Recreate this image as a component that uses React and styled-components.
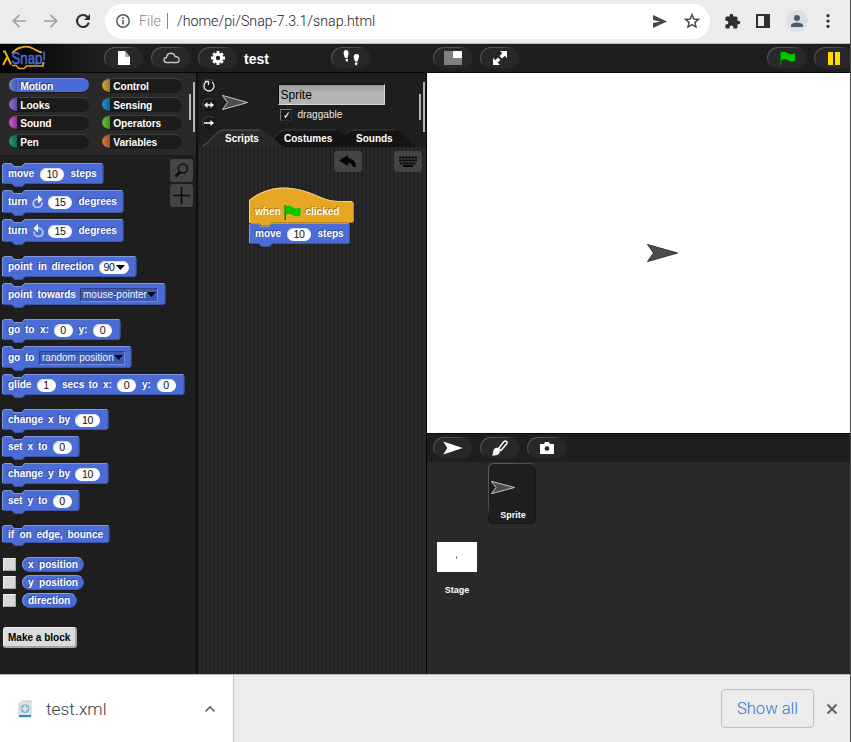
import React from "react";
import styled, { createGlobalStyle } from "styled-components";

const Global = createGlobalStyle`
  *, *::before, *::after { box-sizing: border-box; }
  html, body { margin: 0; padding: 0; background: #1e1e1e; overflow: hidden; }
  svg { display: block; flex: none; overflow: visible; }
`;

const Window = styled.div`
  width: 851px;
  height: 742px;
  display: grid;
  grid-template-rows: 44px 29px 601px 68px;
  overflow: hidden;
  border-right: 1px solid #4b4b4b;
  font-family: "Liberation Sans", Arial, sans-serif;
  white-space: nowrap;
`;

/* ---------- browser chrome ---------- */
const BrowserBar = styled.header`
  display: flex;
  align-items: center;
  background: #ececec;
  border-bottom: 1px solid #b9bcbc;
  padding: 0 0 1px 12px;
`;
const NavIcons = styled.div`
  display: flex;
  gap: 18px;
  width: 93px;
`;
const AddressBar = styled.div`
  width: 605px;
  height: 35px;
  border-radius: 18px;
  background: #fff;
  display: flex;
  align-items: center;
  padding: 0 10px 0 11px;
  font-family: Roboto, sans-serif;
  font-weight: 300;
  font-size: 14.25px;
  color: #1d2124;
`;
const Scheme = styled.span`
  width: 26px;
  margin-left: 9px;
  color: #80868b;
`;
const Bar = styled.span`
  width: 1px;
  height: 16px;
  background: #85898c;
  margin-left: 2px;
`;
const Url = styled.span`
  flex: 1;
  margin-left: 9px;
`;
const AddressIcons = styled.div`
  display: flex;
  gap: 17px;
  align-items: center;
`;
const BrowserIcons = styled.div`
  display: flex;
  align-items: center;
  gap: 12.5px;
  margin-left: 13.5px;
`;
const Avatar = styled.div`
  width: 22px;
  height: 22px;
  border-radius: 50%;
  background: #dbdfe6;
  display: flex;
  align-items: center;
  justify-content: center;
`;

/* ---------- control bar ---------- */
const ControlBar = styled.div`
  display: flex;
  padding-top: 3px;
  background: linear-gradient(90deg, #000 0, #1e1e1e 100px);
  border-bottom: 1px solid #050505;
  overflow: hidden;
`;
const LogoBox = styled.div`
  width: 104px;
  flex: none;
  padding-left: 2px;
`;
const Group = styled.div`
  display: flex;
  gap: 7px;
  width: ${(p) => p.$w}px;
  flex: none;
`;
const PushButton = styled.div`
  width: 40px;
  height: 22px;
  flex: none;
  border-radius: 11px;
  border: 1px solid transparent;
  background: linear-gradient(#282828, #282828) padding-box,
    linear-gradient(150deg, #5c5c5c 0, #4c4c4c 34%, #222 46%) border-box;
  display: flex;
  align-items: center;
  justify-content: center;
`;
const ProjectTitle = styled.div`
  width: 89px;
  flex: none;
  padding-left: 2px;
  color: #fff;
  font-weight: bold;
  font-size: 14px;
  line-height: 24px;
`;

/* ---------- columns ---------- */
const Main = styled.main`
  display: grid;
  grid-template-columns: 196px 231px 1fr;
  background: #1e1e1e;
`;
const LeftColumn = styled.section`
  position: relative;
  display: flex;
  flex-direction: column;
`;
const Categories = styled.div`
  height: 82px;
  padding: 5px 0 0 9px;
  background: #292929;
  display: grid;
  grid-template-columns: 80px 80px;
  grid-auto-rows: 18.6px;
  column-gap: 13px;
`;
const Category = styled.div`
  height: 15px;
  border-radius: 8px;
  padding-left: 11.3px;
  font-size: 10.2px;
  letter-spacing: -0.1px;
  font-weight: bold;
  line-height: 15px;
  color: #fff;
  text-shadow: ${(p) => (p.$active ? "-1px -1px 0 #25366a" : "-1px -1px 0 #111")};
  border-top: 1px solid ${(p) => (p.$active ? "#7189dc" : "#404040")};
  border-bottom: 1px solid #181818;
  background: linear-gradient(90deg, ${(p) => p.$color}, ${(p) => p.$dark}) 0 0 / 8px 100% no-repeat,
    ${(p) => (p.$active ? "#4a6cd4" : "#1c1c1c")};
`;
const Palette = styled.div`
  display: flex;
  flex-direction: column;
  align-items: flex-start;
  padding: 8.4px 0 0 2px;
`;
const ScrollBars = styled.div`
  position: absolute;
  top: ${(p) => p.$top}px;
  right: ${(p) => p.$right}px;
  display: flex;
  gap: 2px;
  align-items: center;
  &::before, &::after {
    content: "";
    width: 2px;
    height: 26px;
    background: #b4b4b4;
  }
  &::after { height: 50px; }
`;
const ToolStack = styled.div`
  position: absolute;
  top: 86px;
  left: 170px;
  display: flex;
  flex-direction: column;
  gap: 2px;
`;
const ToolButton = styled.div`
  width: ${(p) => p.$w || 23}px;
  height: ${(p) => p.$h || 23}px;
  border-radius: 3px;
  background: #444;
  display: flex;
  align-items: center;
  justify-content: center;
`;

/* ---------- blocks ---------- */
const BlockBody = styled.div`
  position: relative;
  width: ${(p) => p.$w}px;
  height: ${(p) => p.$h}px;
  margin-top: ${(p) => p.$mt || 0}px;
  flex: none;
`;
const BlockShape = styled.svg`
  position: absolute;
  inset: 0;
`;
const BlockContent = styled.div`
  position: relative;
  height: 100%;
  padding: ${(p) => p.$pt || 1}px 0 0 6px;
  display: flex;
  align-items: center;
  font-size: 10px;
  font-weight: bold;
  line-height: 12px;
  color: #fff;
  text-shadow: -1px -1px 0 ${(p) => p.$shadow || "#304896"};
`;
const Word = styled.span`
  flex: none;
  width: ${(p) => p.$w}px;
`;
const NumberSlot = styled.span`
  flex: none;
  width: ${(p) => p.$w}px;
  height: 13px;
  margin-right: ${(p) => p.$mr ?? 6.5}px;
  border-radius: 7px;
  background: #fff;
  box-shadow: inset 1px 1px 0 #d5daea;
  color: #111;
  font-weight: normal;
  font-size: 10.6px;
  letter-spacing: -0.3px;
  line-height: 14px;
  text-shadow: none;
  display: flex;
  align-items: center;
  justify-content: center;
  gap: 1px;
`;
const MenuSlot = styled.span`
  flex: none;
  width: ${(p) => p.$w}px;
  height: 14px;
  background: #3d5ab2;
  border: 1px solid #2c4285;
  border-right-color: #6f89dc;
  border-bottom-color: #6f89dc;
  padding: 0 1px 0 2px;
  display: flex;
  align-items: center;
  justify-content: space-between;
  font-weight: normal;
  font-size: 10px;
  text-shadow: none;
  color: #f4f6ff;
`;
const Dot = styled.i`
  font-style: normal;
  color: #e8957a;
`;
const Watcher = styled.div`
  display: flex;
  align-items: center;
  gap: 6px;
  height: 15px;
  margin: ${(p) => p.$mt}px 0 0 1px;
`;
const WatchBox = styled.div`
  width: 13px;
  height: 13px;
  background: #d8d8d8;
  border: 1px solid #f0f0f0;
  border-right-color: #a8a8a8;
  border-bottom-color: #a8a8a8;
`;
const Reporter = styled.div`
  width: ${(p) => p.$w}px;
  height: 15px;
  border-radius: 8px;
  background: #4a6cd4;
  border: 1px solid #8399e2;
  border-right-color: #3c58b0;
  border-bottom-color: #3c58b0;
  padding-left: 5px;
  color: #fff;
  font-size: 10px;
  font-weight: bold;
  line-height: 14px;
  word-spacing: 2.7px;
  text-shadow: -1px -1px 0 #304896;
`;
const MakeBlock = styled.div`
  width: 74px;
  height: 21px;
  margin: 19px 0 0 1px;
  border-radius: 3px;
  background: #dcdcdc;
  border: 1px solid #f2f2f2;
  border-right: 2px solid #a5a5a5;
  border-bottom: 2px solid #a5a5a5;
  padding-left: 4px;
  font-size: 10px;
  font-weight: bold;
  line-height: 19px;
  color: #000;
`;

/* ---------- middle column ---------- */
const MiddleColumn = styled.section`
  position: relative;
  display: flex;
  flex-direction: column;
  border-left: 2px solid #101010;
  border-right: 1px solid #050505;
`;
const SpriteBar = styled.div`
  height: 56px;
  display: flex;
  padding: 6px 0 0 3.5px;
`;
const RotationStack = styled.div`
  display: flex;
  flex-direction: column;
  gap: 5px;
  width: 20px;
`;
const RotationButton = styled.div`
  width: 14px;
  height: 14px;
  border-radius: 50%;
  background: #181818;
  border: 1px solid #161616;
  border-top-color: #474747;
  border-left-color: #474747;
  display: flex;
  align-items: center;
  justify-content: center;
`;
const CostumeHolder = styled.div`
  width: 56px;
  padding-top: 16px;
`;
const SpriteFields = styled.div`
  padding-top: 5px;
`;
const NameField = styled.div`
  width: 107px;
  height: 21px;
  padding-left: 2px;
  background: linear-gradient(#9c9c9c, #b4b4b4 8px);
  border: 1px solid #0c0c0c;
  border-right-color: #d8d8d8;
  border-bottom-color: #d8d8d8;
  font-size: 12px;
  line-height: 20px;
  color: #000;
`;
const DragRow = styled.div`
  display: flex;
  align-items: center;
  gap: 6px;
  margin: 4px 0 0 2px;
  font-size: 10.1px;
  line-height: 12px;
  color: #e6e6e6;
`;
const DragBox = styled.div`
  width: 12px;
  height: 12px;
  background: #1b1b1b;
  border: 1px solid #777;
  border-right-color: #2c2c2c;
  border-bottom-color: #2c2c2c;
`;
const Tabs = styled.div`
  position: relative;
  height: 18px;
  display: flex;
  padding-left: 27px;
  font-size: 10px;
  line-height: 19px;
  font-weight: bold;
  color: #fff;
`;
const TabShapes = styled.svg`
  position: absolute;
  top: 0;
  left: 0;
`;
const TabLabel = styled.span`
  position: relative;
  width: ${(p) => p.$w}px;
`;
const Scripts = styled.div`
  flex: 1;
  background: repeating-linear-gradient(90deg, #1f1f1f 0 1px, #2a2a2a 1px 3px, #242424 3px 4px);
  padding: 4px 4.5px 0 51px;
`;
const ScriptTools = styled.div`
  display: flex;
  justify-content: flex-end;
  gap: 32px;
`;
const Script = styled.div`
  margin-top: 16.4px;
`;

/* ---------- right column ---------- */
const RightColumn = styled.section`
  display: grid;
  grid-template-rows: 360px 29px 1fr;
  min-width: 0;
`;
const Stage = styled.div`
  background: #fff;
  display: grid;
  place-items: center;
  padding-left: 47px;
`;
const CorralBar = styled.div`
  display: flex;
  gap: 7px;
  padding: 3px 0 0 6px;
  border-top: 1px solid #080808;
`;
const Corral = styled.div`
  background: #292929;
  display: flex;
  align-items: flex-start;
  gap: 11px;
  padding: 1px 0 0 10px;
  color: #fff;
  font-size: 9px;
  font-weight: bold;
  text-align: center;
`;
const StageIcon = styled.div`
  width: 40px;
  margin-top: 79px;
`;
const StageThumb = styled.div`
  height: 30px;
  margin-bottom: 13px;
  background: #fff;
  display: grid;
  place-items: center;
`;
const SpriteIcon = styled.div`
  width: 48px;
  height: 61px;
  border-radius: 6px;
  border: 1px solid transparent;
  background: linear-gradient(#1e1e1e, #1e1e1e) padding-box,
    linear-gradient(135deg, #666 0, #4a4a4a 42%, #171717 50%) border-box;
  display: flex;
  flex-direction: column;
  padding: 17px 0 0 2px;
  gap: 16px;
`;

/* ---------- download bar ---------- */
const DownloadBar = styled.footer`
  display: flex;
  align-items: center;
  background: #ececec;
  border-top: 1px solid #b8b8b8;
  font-family: Roboto, sans-serif;
  font-weight: 300;
  font-size: 17px;
`;
const DownloadItem = styled.div`
  width: 234px;
  height: 100%;
  border-right: 1px solid #c4c4c4;
  background: #fff;
  display: flex;
  align-items: center;
  padding: 0 18px 0 19px;
  font-size: 17.3px;
  color: #3a3d40;
`;
const FileName = styled.span`
  flex: 1;
  margin-left: 15px;
`;
const ShowAll = styled.div`
  width: 93px;
  height: 39px;
  margin-left: auto;
  border: 1px solid #bfbfbf;
  border-radius: 4px;
  color: #3272d8;
  font-size: 16.6px;
  text-align: center;
  line-height: 37px;
`;
const CloseSlot = styled.div`
  width: 36px;
  display: flex;
  justify-content: center;
`;

function BlockOutline({ w, h }) {
  return (
    <BlockShape width={w} height={h + 3}>
      <path
        d={`M0 2 L2 0 H9.5 L12 3 H20 L23 0 H${w - 2} L${w} 2 V${h - 2} L${w - 2} ${h} H23 L20 ${h + 3} H13 L10 ${h} H2 L0 ${h - 2} Z`}
        fill="#4a6cd4"
      />
      <path
        d={`M.5 ${h - 1} V2 L2 .5 H9.5 L11.5 3.5 H20 L22.5 .5 H${w - 1}`}
        fill="none"
        stroke="#8197e0"
      />
      <path
        d={`M2 ${h - 0.5} H10 L13 ${h + 2.5} H20 L23 ${h - 0.5} H${w - 2} L${w - 0.5} ${h - 2} V3`}
        fill="none"
        stroke="#3b56a9"
      />
    </BlockShape>
  );
}

function Block({ w, h, mt, pt, children }) {
  return (
    <BlockBody $w={w} $h={h} $mt={mt}>
      <BlockOutline w={w + 0.4} h={h} />
      <BlockContent $pt={pt}>{children}</BlockContent>
    </BlockBody>
  );
}

const Caret = () => (
  <svg width="9" height="5"><path d="M0 0H9L4.5 5Z" fill="#050505" /></svg>
);

const Turn = ({ flip }) => (
  <svg width="12" height="16" viewBox="0 0 12 16">
    <g transform={flip ? "translate(12 0) scale(-1 1)" : undefined}>
      <path d="M6 5.2C.2 5.5 0 11.5 3.500 13C7 14.500 10.500 12 10 8.300" fill="none" stroke="#b9c8f6" strokeWidth="1.7" />
      <path d="M6 .8L10.500 5.500L6 9.500Z" fill="#fff" />
    </g>
  </svg>
);

const Arrow = ({ w, h, fill = "#4c4c4c", stroke }) => (
  <svg width={w} height={h} viewBox="0 0 31 18" preserveAspectRatio="none">
    <path d="M.5 .5L30.500 9L.5 17.500L6.500 9Z" fill={fill} stroke={stroke} vectorEffect="non-scaling-stroke" />
  </svg>
);

const Flag = ({ w = 16, h = 15 }) => (
  <svg width={w} height={h} viewBox="0 0 16 15">
    <path d="M0 0H1.500V15H0Z" fill="#067a06" />
    <path d="M1 1.500C4 .2 6 1 8.500 2.500C11 4 13 3.300 16 2.800V10.500C13 12 10.500 11.300 8.500 10C6 8.400 3.500 8.800 1 10Z" fill="#00c800" />
  </svg>
);

const Logo = () => (
  <svg width="48" height="24" viewBox="0 0 48 24">
    <path d="M10 6C13 4 15 .5 19 .5C23-.8 28-.3 31 1.500C34 3 37 5 40 5.500" fill="none" stroke="#e8a917" strokeWidth="1.8" />
    <path d="M10 18.500H14L17 21.500H22L24.500 19H41V15" fill="none" stroke="#e8a917" strokeWidth="1.6" />
    <path d="M1 4.500H3L9 17.500M5.300 10L1 18" fill="none" stroke="#f0ad10" strokeWidth="2" />
    <text x="9.500" y="16.500" textLength="34.500" lengthAdjust="spacingAndGlyphs" fontFamily="Liberation Sans" fontSize="16.500" fill="#4a6cd4" stroke="#4a6cd4" strokeWidth=".5">Snap!</text>
  </svg>
);

const categories = [
  ["Motion", "#6f8ad0", "#3f5aa8"], ["Control", "#d8ac45", "#9d7420"],
  ["Looks", "#9a74d0", "#6543a5"], ["Sensing", "#2196d0", "#0a6394"],
  ["Sound", "#d060cb", "#8c2f92"], ["Operators", "#76c13c", "#418b10"],
  ["Pen", "#20a078", "#08664b"], ["Variables", "#e07d42", "#a54e1b"],
];

export default function App() {
  return (
    <>
      <Global />
      <Window>
        <BrowserBar>
          <NavIcons>
            <svg width="14" height="14" viewBox="0 0 14 14" fill="none" stroke="#a0a0a0" strokeWidth="1.7"><path d="M14 7H1.500M7.500 .8L1.300 7L7.500 13.200" /></svg>
            <svg width="14" height="14" viewBox="0 0 14 14" fill="none" stroke="#a0a0a0" strokeWidth="1.700"><path d="M0 7H12.500M6.500 .8L12.700 7L6.500 13.200" /></svg>
            <svg width="14" height="14" viewBox="0 0 14 14" fill="none" stroke="#2b3034" strokeWidth="2.100"><path d="M12.800 8.500A6 6 0 1 1 11.500 3" /><path d="M14 0V6H8Z" fill="#2b3034" stroke="none" /></svg>
          </NavIcons>
          <AddressBar>
            <svg width="14" height="14" viewBox="0 0 14 14" fill="none" stroke="#56595e"><circle cx="7" cy="7" r="6.200" strokeWidth="1.500" /><path d="M7 6V10.500M7 3.300V4.900" strokeWidth="1.600" /></svg>
            <Scheme>File</Scheme>
            <Bar />
            <Url>/home/pi/Snap-7.3.1/snap.html</Url>
            <AddressIcons>
              <svg width="15" height="13" viewBox="0 0 15 13" fill="#46494c"><path d="M1 0L15 6.500L1 13V8L8 6.500L1 5Z" /></svg>
              <svg width="16" height="16" viewBox="0 0 24 24" fill="none" stroke="#46494c" strokeWidth="2.200"><path d="M12 2.500L14.700 8.900L21.700 9.500L16.400 14L18 21L12 17.300L6 21L7.600 14L2.300 9.500L9.300 8.900Z" /></svg>
            </AddressIcons>
          </AddressBar>
          <BrowserIcons>
            <svg width="17" height="17" viewBox="0 0 24 24" fill="#2b3034"><path d="M20.500 11H19V7c0-1.100-.9-2-2-2h-4V3.500a2.500 2.500 0 0 0-5 0V5H4c-1.100 0-2 .9-2 2v3.800h1.500a2.700 2.700 0 0 1 0 5.400H2V20c0 1.100.9 2 2 2h3.800v-1.500a2.700 2.700 0 0 1 5.400 0V22H17c1.100 0 2-.9 2-2v-4h1.500a2.500 2.500 0 0 0 0-5Z" /></svg>
            <svg width="20" height="14" viewBox="0 0 20 14"><path d="M3 0H17V14H3ZM5 2V12H11V2Z" fillRule="evenodd" fill="#2b3034" /></svg>
            <Avatar><svg width="12" height="13" viewBox="0 0 12 13" fill="#4d5870"><circle cx="6" cy="3" r="3" /><path d="M0 12V10C1 6.500 11 6.500 12 10V12Z" /></svg></Avatar>
            <svg width="20" height="14" viewBox="0 0 20 14" fill="#2b3034"><circle cx="8" cy="1.700" r="1.600" /><circle cx="8" cy="7" r="1.600" /><circle cx="8" cy="12.300" r="1.600" /></svg>
          </BrowserIcons>
        </BrowserBar>

        <ControlBar>
          <LogoBox><Logo /></LogoBox>
          <Group $w={138}>
            <PushButton><svg width="12" height="14" viewBox="0 0 12 14"><path d="M0 0H7L12 6V14H0Z" fill="#fff" /><path d="M7 0V6H12Z" fill="#aaa" /></svg></PushButton>
            <PushButton><svg width="17" height="12" viewBox="0 0 17 12"><path d="M4 10.500C0 10.500 0 5.800 3.500 5.500C4 0 11 0 12 4.500C17 4.500 17.500 10.500 13.500 10.500Z" fill="none" stroke="#c8c8c8" strokeWidth="1.300" /></svg></PushButton>
            <PushButton><svg width="14" height="14" viewBox="-7 -7 14 14"><circle r="3.700" fill="none" stroke="#fff" strokeWidth="3" /><path d="M0-7V-4M0 4V7M-7 0H-4M4 0H7M-4.800-4.800L-3-3M3 3L4.800 4.800M-4.800 4.800L-3 3M3-3L4.800-4.800" stroke="#fff" strokeWidth="2.800" /></svg></PushButton>
          </Group>
          <ProjectTitle>test</ProjectTitle>
          <Group $w={102}>
            <PushButton><svg width="17" height="16" viewBox="0 0 17 16" fill="#fff"><path d="M1 1C3-1 6 0 5.500 4L4.500 8H2C1 5 0 3 1 1ZM2.500 9H5C5.500 13 2.500 12 2.500 9ZM11 5C13 3 17 4 16 7L14.500 11.500H12C11.500 9 10 7 11 5ZM12 12.500H14.500C14.500 17 11.500 16 12 12.500Z" /></svg></PushButton>
          </Group>
          <Group $w={334}>
            <PushButton><svg width="18" height="14"><path d="M0 0H18V14H0Z" fill="#808080" /><path d="M9 0H18V7H9Z" fill="#fff" /></svg></PushButton>
            <PushButton><svg width="14" height="14" viewBox="0 0 14 14" fill="#fff"><path d="M7 0H14V7L11.700 4.700L9 7.500L6.500 5L9.300 2.300ZM7 14H0V7L2.300 9.300L5 6.500L7.500 9L4.700 11.700Z" /></svg></PushButton>
          </Group>
          <Group $w={83}>
            <PushButton><Flag w={15} h={14} /></PushButton>
            <PushButton><svg width="12" height="13"><path d="M0 0H5V13H0ZM7 0H12V13H7Z" fill="#ffdc00" /></svg></PushButton>
          </Group>
        </ControlBar>

        <Main>
          <LeftColumn>
            <Categories>
              {categories.map(([name, color, dark], i) => (
                <Category key={name} $color={color} $dark={dark} $active={i === 0}>{name}</Category>
              ))}
            </Categories>
            <ScrollBars $top={9} $right={1} />
            <Palette>
              <Block w={101} h={21}><Word $w={32}>move</Word><NumberSlot $w={24}>10</NumberSlot><Word>steps</Word></Block>
              <Block w={121} h={23} mt={6}><Word $w={24}>turn</Word><Turn /><Word $w={4} /><NumberSlot $w={24}>15</NumberSlot><Word>degrees</Word></Block>
              <Block w={121} h={23} mt={6}><Word $w={24}>turn</Word><Turn flip /><Word $w={4} /><NumberSlot $w={24}>15</NumberSlot><Word>degrees</Word></Block>
              <Block w={134} h={21} mt={14}><Word $w={30}>point</Word><Word $w={13.500}>in</Word><Word $w={47.500}>direction</Word><NumberSlot $w={30}>90<Caret /></NumberSlot></Block>
              <Block w={163} h={22} mt={6}><Word $w={29.500}>point</Word><Word $w={42.500}>towards</Word><MenuSlot $w={78}>mouse-pointer<Caret /></MenuSlot></Block>
              <Block w={118} h={21} mt={14}><Word $w={17}>go</Word><Word $w={15}>to</Word><Word $w={13.500}>x:</Word><NumberSlot $w={19} $mr={6}>0</NumberSlot><Word $w={14.500}>y:</Word><NumberSlot $w={19}>0</NumberSlot></Block>
              <Block w={129} h={22} mt={6}><Word $w={17}>go</Word><Word $w={14}>to</Word><MenuSlot $w={86}><span>random<Dot>·</Dot>position</span><Caret /></MenuSlot></Block>
              <Block w={182} h={21} mt={6}><Word $w={28.500}>glide</Word><NumberSlot $w={19} $mr={6.500}>1</NumberSlot><Word $w={26.500}>secs</Word><Word $w={14.500}>to</Word><Word $w={14}>x:</Word><NumberSlot $w={19} $mr={6}>0</NumberSlot><Word $w={14.500}>y:</Word><NumberSlot $w={19}>0</NumberSlot></Block>
              <Block w={106} h={21} mt={14}><Word $w={40}>change</Word><Word $w={10.500}>x</Word><Word $w={16.500}>by</Word><NumberSlot $w={25}>10</NumberSlot></Block>
              <Block w={77} h={21} mt={6}><Word $w={19.500}>set</Word><Word $w={10.500}>x</Word><Word $w={14.500}>to</Word><NumberSlot $w={19}>0</NumberSlot></Block>
              <Block w={106} h={21} mt={6}><Word $w={40}>change</Word><Word $w={10.500}>y</Word><Word $w={16.500}>by</Word><NumberSlot $w={25}>10</NumberSlot></Block>
              <Block w={77} h={21} mt={6}><Word $w={19.500}>set</Word><Word $w={10.500}>y</Word><Word $w={14.500}>to</Word><NumberSlot $w={19}>0</NumberSlot></Block>
              <Block w={107} h={18} mt={14} pt={0.5}><Word $w={11.500}>if</Word><Word $w={17}>on</Word><Word $w={31}>edge,</Word><Word>bounce</Word></Block>
              <Watcher $mt={13.600}><WatchBox /><Reporter $w={62}>x position</Reporter></Watcher>
              <Watcher $mt={3}><WatchBox /><Reporter $w={62}>y position</Reporter></Watcher>
              <Watcher $mt={3}><WatchBox /><Reporter $w={55}>direction</Reporter></Watcher>
              <MakeBlock>Make a block</MakeBlock>
            </Palette>
            <ToolStack>
              <ToolButton><svg width="15" height="15" viewBox="0 0 15 15" fill="none" stroke="#0a0a0a"><circle cx="9" cy="5.500" r="4.500" strokeWidth="1.300" /><path d="M6 9L1.500 13.500" strokeWidth="2.600" /></svg></ToolButton>
              <ToolButton><svg width="17" height="17" viewBox="0 0 17 17" stroke="#0a0a0a" strokeWidth="1.500"><path d="M8.500 0V17M0 8.500H17" /></svg></ToolButton>
            </ToolStack>
          </LeftColumn>

          <MiddleColumn>
            <SpriteBar>
              <RotationStack>
                <RotationButton><svg width="12" height="12" viewBox="0 0 12 12" fill="none" stroke="#e8e8e8" strokeWidth="1.300"><path d="M3 2A5 5 0 1 0 9 2" /><path d="M2 1.500H5.500V5" /></svg></RotationButton>
                <RotationButton><svg width="10" height="6" viewBox="0 0 10 6" fill="#fff"><path d="M0 3L3.500 0V2.300H6.500V0L10 3L6.500 6V3.700H3.500V6Z" /></svg></RotationButton>
                <RotationButton><svg width="10" height="6" viewBox="0 0 10 6" fill="#fff"><path d="M0 2.300H6.500V0L10 3L6.500 6V3.700H0Z" /></svg></RotationButton>
              </RotationStack>
              <CostumeHolder><Arrow w={26} h={15} stroke="#c8c8c8" /></CostumeHolder>
              <SpriteFields>
                <NameField>Sprite</NameField>
                <DragRow>
                  <DragBox><svg width="10" height="10" viewBox="0 0 10 10" fill="none" stroke="#fff" strokeWidth="1.200"><path d="M3.500 5.500L4.700 7.200L7.500 2.500" /></svg></DragBox>
                  draggable
                </DragRow>
              </SpriteFields>
            </SpriteBar>
            <ScrollBars $top={9} $right={1} />
            <Tabs>
              <TabShapes width="228" height="18">
                <path d="M133 18C142 16 147 1 157 1H197C206 1 210 14 219 18Z" fill="#141414" />
                <path d="M135 17C142 15 147 1 157 1H197" fill="none" stroke="#3c3c3c" />
                <path d="M68 18C76 13 80 1 89 1H137C147 1 152 16 161 18Z" fill="#141414" />
                <path d="M75 10C80 4 82 1 89 1H137" fill="none" stroke="#3c3c3c" />
                <path d="M2 18C12 15 17 1 26 1H62C72 1 77 14 87 18Z" fill="#292929" />
                <path d="M4 17C12 15 17 1 26 1H62" fill="none" stroke="#5c5c5c" />
              </TabShapes>
              <TabLabel $w={59}>Scripts</TabLabel>
              <TabLabel $w={72}>Costumes</TabLabel>
              <TabLabel $w={40}>Sounds</TabLabel>
            </Tabs>
            <Scripts>
              <ScriptTools>
                <ToolButton $w={28} $h={21}><svg width="18" height="13" viewBox="0 0 18 13"><path d="M0 5.500L9 0V3C14 3.500 17 7 17 12H14C13 9 12 8 9 8V11Z" fill="#050505" /></svg></ToolButton>
                <ToolButton $w={28} $h={21}><svg width="18" height="11" viewBox="0 0 18 11"><path d="M0 1.500H18M0 4.500H18M1 7.500H17" stroke="#080808" strokeWidth="2.200" strokeDasharray="2.500 .6" /><path d="M4 10H14" stroke="#080808" strokeWidth="2" /></svg></ToolButton>
              </ScriptTools>
              <Script>
                <BlockBody $w={105} $h={35}>
                  <BlockShape width="105" height="38">
                    <path d="M0 12C22-6 46-1 62 5C74 10 80 13 90 13H103L105 15V33L103 35H0Z" fill="#e6a822" />
                    <path d="M.5 35V12.500C22-5 46-.5 62 5.500C74 10.500 80 13.500 90 13.500H103" fill="none" stroke="#f2cf86" />
                    <path d="M104.500 15V33L103 34.500H23" fill="none" stroke="#b8861b" />
                  </BlockShape>
                  <BlockContent $pt={13} $shadow="#a07317"><Word $w={29}>when</Word><Flag w={17} h={15} /><Word $w={4.500} /><Word>clicked</Word></BlockContent>
                </BlockBody>
                <BlockBody $w={101} $h={21}>
                  <BlockOutline w={101} h={21} />
                  <BlockShape width="24" height="4">
                    <path d="M9.500 -.5L12.500 2.800H20L23 -.5Z" fill="#e6a822" />
                    <path d="M9.500 0L12.500 2.800H20L23 0" fill="none" stroke="#b8861b" strokeWidth=".8" />
                  </BlockShape>
                  <BlockContent><Word $w={32}>move</Word><NumberSlot $w={24} $mr={6.500}>10</NumberSlot><Word>steps</Word></BlockContent>
                </BlockBody>
              </Script>
            </Scripts>
          </MiddleColumn>

          <RightColumn>
            <Stage><Arrow w={31} h={18} stroke="#303030" /></Stage>
            <CorralBar>
              <PushButton><Arrow w={20} h={14} fill="#fff" /></PushButton>
              <PushButton><svg width="16" height="16" viewBox="0 0 16 16"><path d="M6.500 8.500L12 1.500C14 0 16 2 14.500 4L9 10.500Z" fill="none" stroke="#fff" strokeWidth="1.500" /><path d="M0 15.500C2 13 0 10 3.500 8C6 7 9 10 7.500 13C6.500 15 4 15.500 0 15.500Z" fill="#fff" /></svg></PushButton>
              <PushButton><svg width="14" height="12" viewBox="0 0 14 12"><path d="M0 2H4L5 0H9L10 2H14V12H0Z" fill="#fff" /><circle cx="7" cy="6.500" r="2.300" fill="#222" /></svg></PushButton>
            </CorralBar>
            <Corral>
              <StageIcon>
                <StageThumb><svg width="2" height="3"><path d="M0 1.500H1" stroke="#555" strokeWidth="2" /></svg></StageThumb>
                Stage
              </StageIcon>
              <SpriteIcon><Arrow w={24} h={13} stroke="#c8c8c8" />Sprite</SpriteIcon>
            </Corral>
          </RightColumn>
        </Main>

        <DownloadBar>
          <DownloadItem>
            <svg width="12" height="16" viewBox="0 0 12 16"><path d="M3 0H12V16H0V3Z" fill="#dfe3e5" stroke="#b9bfc2" strokeWidth=".7" /><path d="M0 14H12V16H0Z" fill="#238fba" /><circle cx="6" cy="7.700" r="3.800" fill="#a8d3e6" stroke="#4a9fc2" /><path d="M2.500 7.700H9.500M6 4V11.500" stroke="#e4f1f7" /></svg>
            <FileName>test.xml</FileName>
            <svg width="10" height="6" viewBox="0 0 10 6" fill="none" stroke="#5f6368" strokeWidth="1.700"><path d="M.5 5.500L5 1L9.500 5.500" /></svg>
          </DownloadItem>
          <ShowAll>Show all</ShowAll>
          <CloseSlot><svg width="10" height="10" viewBox="0 0 10 10" stroke="#5f6368" strokeWidth="2"><path d="M.5 .5L9.500 9.500M9.500 .5L.5 9.500" /></svg></CloseSlot>
        </DownloadBar>
      </Window>
    </>
  );
}
